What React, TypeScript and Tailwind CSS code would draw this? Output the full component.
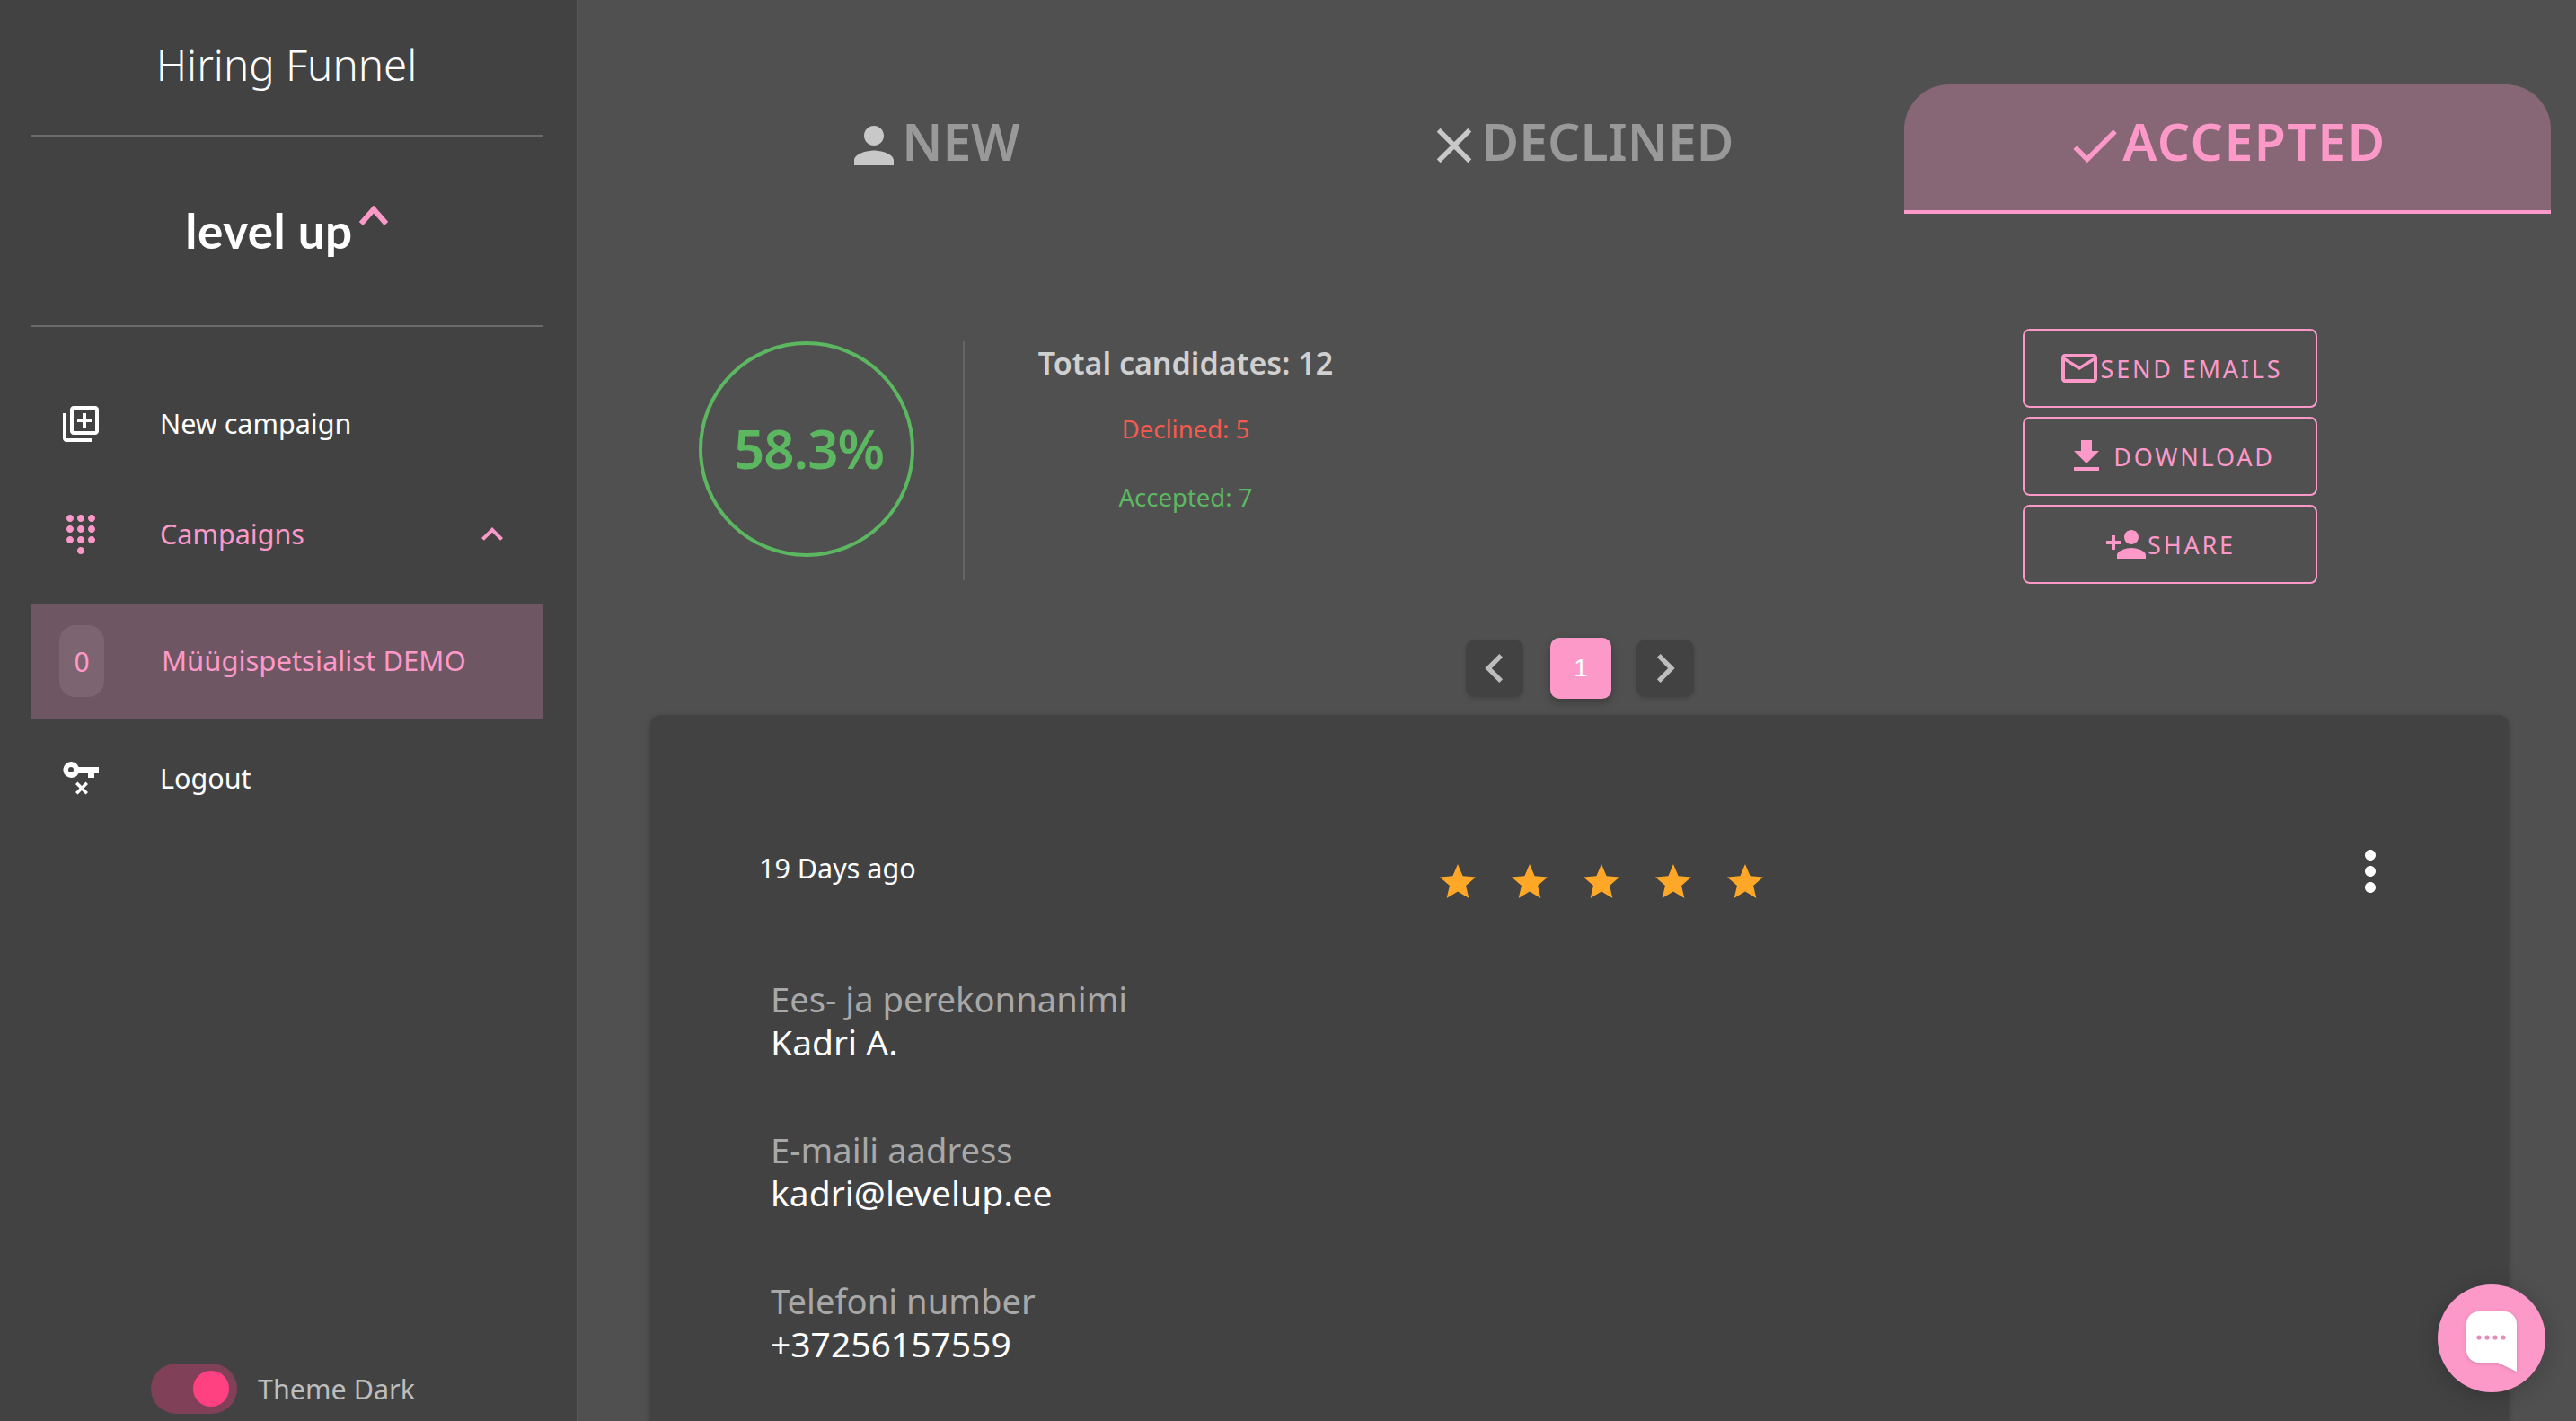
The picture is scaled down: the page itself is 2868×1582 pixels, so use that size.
import type { ReactNode } from "react";

const paths = {
  person: "M12 12c2.21 0 4-1.79 4-4s-1.79-4-4-4-4 1.79-4 4 1.79 4 4 4zm0 2c-2.67 0-8 1.34-8 4v2h16v-2c0-2.66-5.33-4-8-4z",
  close: "M19 6.41L17.59 5 12 10.59 6.41 5 5 6.41 10.59 12 5 17.59 6.41 19 12 13.41 17.59 19 19 17.59 13.41 12z",
  check: "M9 16.17L4.83 12l-1.42 1.41L9 19 21 7l-1.41-1.41z",
  mail: "M20 4H4c-1.1 0-1.99.9-1.99 2L2 18c0 1.1.9 2 2 2h16c1.1 0 2-.9 2-2V6c0-1.1-.9-2-2-2zm0 14H4V8l8 5 8-5v10zm-8-7L4 6h16l-8 5z",
  download: "M19 9h-4V3H9v6H5l7 7 7-7zM5 18v2h14v-2H5z",
  personAdd: "M15 12c2.21 0 4-1.79 4-4s-1.79-4-4-4-4 1.79-4 4 1.79 4 4 4zm-9-2V7H4v3H1v2h3v3h2v-3h3v-2H6zm9 4c-2.67 0-8 1.34-8 4v2h16v-2c0-2.66-5.33-4-8-4z",
  libraryAdd: "M4 6H2v14c0 1.1.9 2 2 2h14v-2H4V6zm16-4H8c-1.1 0-2 .9-2 2v12c0 1.1.9 2 2 2h12c1.1 0 2-.9 2-2V4c0-1.1-.9-2-2-2zm0 14H8V4h12v12zm-7-2h2v-3h3V9h-3V6h-2v3h-3v2h3z",
  dialpad: "M12 19c-1.1 0-2 .9-2 2s.9 2 2 2 2-.9 2-2-.9-2-2-2zM6 1c-1.1 0-2 .9-2 2s.9 2 2 2 2-.9 2-2-.9-2-2-2zm0 6c-1.1 0-2 .9-2 2s.9 2 2 2 2-.9 2-2-.9-2-2-2zm0 6c-1.1 0-2 .9-2 2s.9 2 2 2 2-.9 2-2-.9-2-2-2zm12-8c1.1 0 2-.9 2-2s-.9-2-2-2-2 .9-2 2 .9 2 2 2zm-6 8c-1.1 0-2 .9-2 2s.9 2 2 2 2-.9 2-2-.9-2-2-2zm6 0c-1.1 0-2 .9-2 2s.9 2 2 2 2-.9 2-2-.9-2-2-2zm0-6c-1.1 0-2 .9-2 2s.9 2 2 2 2-.9 2-2-.9-2-2-2zm-6 0c-1.1 0-2 .9-2 2s.9 2 2 2 2-.9 2-2-.9-2-2-2zm0-6c-1.1 0-2 .9-2 2s.9 2 2 2 2-.9 2-2-.9-2-2-2z",
  expandLess: "M12 8l-6 6 1.41 1.41L12 10.83l4.59 4.58L18 14z",
  chevronLeft: "M15.41 7.41L14 6l-6 6 6 6 1.41-1.41L10.83 12z",
  chevronRight: "M10 6L8.59 7.41 13.17 12l-4.58 4.59L10 18l6-6z",
  star: "M12 17.27L18.18 21l-1.64-6.99L22 9.24l-7.19-.61L12 2 9.19 8.63 2 9.24l5.46 4.77L5.82 21z",
  moreVert: "M12 8c1.1 0 2-.9 2-2s-.9-2-2-2-2 .9-2 2 .9 2 2 2zm0 2c-1.1 0-2 .9-2 2s.9 2 2 2 2-.9 2-2-.9-2-2-2zm0 6c-1.1 0-2 .9-2 2s.9 2 2 2 2-.9 2-2-.9-2-2-2z",
};

const Icon = ({ d, className }: { d: string; className: string }) => (
  <svg viewBox="0 0 24 24" fill="currentColor" className={className}>
    <path d={d} />
  </svg>
);

const KeyOff = () => (
  <svg viewBox="0 0 40 38" fill="#fff" className="h-[38px] w-[40px]">
    <path d="M9 0a9 9 0 0 1 8.500 6H40v7h-5v5h-7v-5H17.500A9 9 0 1 1 9 0zm0 6a3 3 0 1 0 0 6 3 3 0 0 0 0-6z" />
    <path d="M14 23l2.500-2.500 4.500 4.500 4.500-4.500 2.500 2.500-4.500 4.500 4.500 4.500-2.500 2.500-4.500-4.500-4.500 4.500-2.500-2.500 4.500-4.500z" transform="translate(0 2)" />
  </svg>
);

const NavRow = ({ icon, label, pink, trailing }: { icon: ReactNode; label: string; pink?: boolean; trailing?: ReactNode }) => (
  <div className={`flex h-[60px] items-center pl-[36px] pr-[32px] ${pink ? "text-[#fc99c9]" : "text-white"}`}>
    <div className="flex w-[40px] justify-center">{icon}</div>
    <span className="mb-[2px] ml-[68px] text-[30.5px] leading-none">{label}</span>
    {trailing && <div className="ml-auto">{trailing}</div>}
  </div>
);

const Sidebar = () => (
  <aside className="flex h-full w-[644px] shrink-0 flex-col border-r-2 border-[#585858] bg-[#424242] pl-[34px] pr-[38px]">
    <div className="flex h-[152px] shrink-0 items-center justify-center border-b-2 border-[#6b6b6b]">
      <h1 className="mt-[-6px] text-[47.5px] font-light leading-none text-white">Hiring Funnel</h1>
    </div>
    <div className="flex h-[212px] shrink-0 items-center justify-center border-b-2 border-[#6b6b6b]">
      <div className="mt-[-2px] flex items-start text-white">
        <span className="font-['Lato',sans-serif] text-[53px] font-bold leading-none tracking-[0.5px]">level up</span>
        <svg viewBox="0 0 32 22" fill="none" stroke="#fc99c9" strokeWidth="6" className="ml-[7px] mt-[-1px] h-[22px] w-[32px]">
          <path d="M2 20L16 4l14 16" />
        </svg>
      </div>
    </div>
    <div className="mt-[78px]">
      <NavRow icon={<Icon d={paths.libraryAdd} className="h-[48px] w-[48px] shrink-0" />} label="New campaign" />
    </div>
    <div className="mt-[63px]">
      <NavRow
        pink
        icon={<Icon d={paths.dialpad} className="h-[48px] w-[48px] shrink-0" />}
        label="Campaigns"
        trailing={<Icon d={paths.expandLess} className="h-[48px] w-[48px]" />}
      />
    </div>
    <div className="mt-[47px] flex h-[128px] items-center bg-[#6e5763] pl-[32px] text-[#fc99c9]">
      <div className="flex h-[80px] w-[50px] items-center justify-center rounded-[18px] bg-[#7c6571] text-[30px]">0</div>
      <span className="mb-[2px] ml-[64px] text-[31px] leading-none">Müügispetsialist DEMO</span>
    </div>
    <div className="mt-[37px]">
      <NavRow icon={<KeyOff />} label="Logout" />
    </div>
    <div className="mt-auto mb-[8px] flex items-center pl-[134px]">
      <div className="flex h-[56px] w-[96px] items-center justify-end rounded-full bg-[#804058] pr-[9px]">
        <div className="h-[40px] w-[40px] rounded-full bg-[#ff4081]" />
      </div>
      <span className="ml-[23px] text-[30.5px] leading-none text-[#bdbdbd]">Theme Dark</span>
    </div>
  </aside>
);

const Tab = ({ icon, label, active }: { icon: string; label: string; active?: boolean }) => (
  <div
    className={`flex h-[144px] items-center justify-center pr-[4px] ${
      active ? "rounded-t-[50px] border-b-4 border-[#fc99c9] bg-[#876675] pb-[14px] text-[#fc99c9]" : "pb-[18px] text-[#999999]"
    }`}
  >
    <Icon d={icon} className={`mt-[10px] h-[66px] w-[66px] shrink-0 ${active ? "" : "text-[#c8c8c8]"}`} />
    <span className={`ml-[-2px] text-[57px] font-semibold leading-none ${active ? "tracking-[1.5px]" : ""}`}>{label}</span>
  </div>
);

const ActionButton = ({ icon, label, iconClass }: { icon: string; label: string; iconClass: string }) => (
  <div className="flex h-[88px] w-[328px] items-center justify-center rounded-[8px] border-2 border-[#fc99c9] text-[#fc99c9]">
    <Icon d={icon} className={`shrink-0 ${iconClass}`} />
    <span className="text-[27px] leading-none tracking-[2.8px]">{label}</span>
  </div>
);

const Field = ({ label, value }: { label: string; value: string }) => (
  <div className="mb-[72px] leading-[48px]">
    <div className="text-[38.2px] text-[#a8a8a8]">{label}</div>
    <div className="text-[39px] text-white">{value}</div>
  </div>
);

const stars = [0, 1, 2, 3, 4];

const Card = () => (
  <div className="ml-[44px] mr-[47px] mt-[18px] h-[1000px] rounded-[12px] bg-[#424242] shadow-[0_2px_6px_rgba(0,0,0,0.25)]">
    <div className="flex pl-[121px] pt-[130px]">
      <div className="w-[754px] text-[30.5px] leading-[80px] text-white">19 Days ago</div>
      <div className="flex gap-[32px] pt-[32px]">
        {stars.map((s) => (
          <Icon key={s} d={paths.star} className="h-[48px] w-[48px] text-[#ffa726]" />
        ))}
      </div>
      <Icon d={paths.moreVert} className="ml-[636px] mt-[8px] h-[72px] w-[72px] text-white" />
    </div>
    <div className="pl-[134px] pt-[82px]">
      <Field label="Ees- ja perekonnanimi" value="Kadri A." />
      <Field label="E-maili aadress" value="kadri@levelup.ee" />
      <Field label="Telefoni number" value="+37256157559" />
    </div>
  </div>
);

const ChatBubble = () => (
  <div className="fixed bottom-[32px] right-[34px] flex h-[120px] w-[120px] items-center justify-center rounded-full bg-[#fc99c9] shadow-[0_4px_24px_rgba(0,0,0,0.2)]">
    <svg viewBox="0 0 56 67" className="mt-[6px] h-[67px] w-[56px] drop-shadow-sm">
      <path d="M14 0h28a14 14 0 0 1 14 14v53l-21-10H14A14 14 0 0 1 0 43V14A14 14 0 0 1 14 0z" fill="#fff" />
      <g fill="#e78bb8">
        <circle cx="14" cy="29" r="2.600" />
        <circle cx="23" cy="29" r="2.600" />
        <circle cx="32" cy="29" r="2.600" />
        <circle cx="41" cy="29" r="2.600" />
      </g>
    </svg>
  </div>
);

export default function App() {
  return (
    <div className="flex h-screen overflow-hidden bg-[#505050] font-['Noto_Sans',sans-serif]">
      <Sidebar />
      <main className="h-full min-w-0 flex-1 overflow-hidden pl-[36px] pr-[28px] pt-[94px]">
        <div className="grid grid-cols-3">
          <Tab icon={paths.person} label="NEW" />
          <Tab icon={paths.close} label="DECLINED" />
          <Tab icon={paths.check} label="ACCEPTED" active />
        </div>

        <div className="mt-[128px] flex h-[284px]">
          <div className="ml-[98px] mt-[14px] flex h-[240px] w-[240px] shrink-0 items-center justify-center rounded-full border-4 border-[#5cb860] pb-[2px] pl-[5px] text-[60px] font-semibold leading-none tracking-[-1px] text-[#5cb860]">
            58.3%
          </div>
          <div className="ml-[54px] mt-[14px] h-[266px] w-[2px] shrink-0 bg-[#666666]" />
          <div className="flex w-[492px] shrink-0 flex-col items-center pt-[18px]">
            <div className="text-[34px] font-semibold leading-[40px] text-[#d0d0d0]">Total candidates: 12</div>
            <div className="mt-[36px] text-[27.5px] leading-[36px] text-[#f55a4e]">Declined: 5</div>
            <div className="mt-[40px] text-[27.5px] leading-[36px] text-[#5cb860]">Accepted: 7</div>
          </div>
          <div className="ml-[686px] flex flex-col gap-[10px]">
            <ActionButton icon={paths.mail} label="SEND EMAILS" iconClass="h-[48px] w-[48px]" />
            <ActionButton icon={paths.download} label="DOWNLOAD" iconClass="mr-[6px] h-[48px] w-[48px]" />
            <ActionButton icon={paths.personAdd} label="SHARE" iconClass="h-[48px] w-[48px]" />
          </div>
        </div>

        <div className="mr-[2px] mt-[60px] flex items-center justify-center font-['Liberation_Sans',sans-serif]">
          <div className="flex h-[64px] w-[64px] items-center justify-center rounded-[10px] bg-[#424242] text-[#bdbdbd] shadow-[0_2px_4px_rgba(0,0,0,0.15)]">
            <Icon d={paths.chevronLeft} className="h-[64px] w-[64px]" />
          </div>
          <div className="ml-[30px] flex h-[68px] w-[68px] items-center justify-center rounded-[10px] bg-[#fc99c9] text-[28px] text-white shadow-[0_4px_10px_rgba(0,0,0,0.25)]">
            1
          </div>
          <div className="ml-[28px] flex h-[64px] w-[64px] items-center justify-center rounded-[10px] bg-[#424242] text-[#bdbdbd] shadow-[0_2px_4px_rgba(0,0,0,0.15)]">
            <Icon d={paths.chevronRight} className="h-[64px] w-[64px]" />
          </div>
        </div>

        <Card />
      </main>
      <ChatBubble />
    </div>
  );
}
